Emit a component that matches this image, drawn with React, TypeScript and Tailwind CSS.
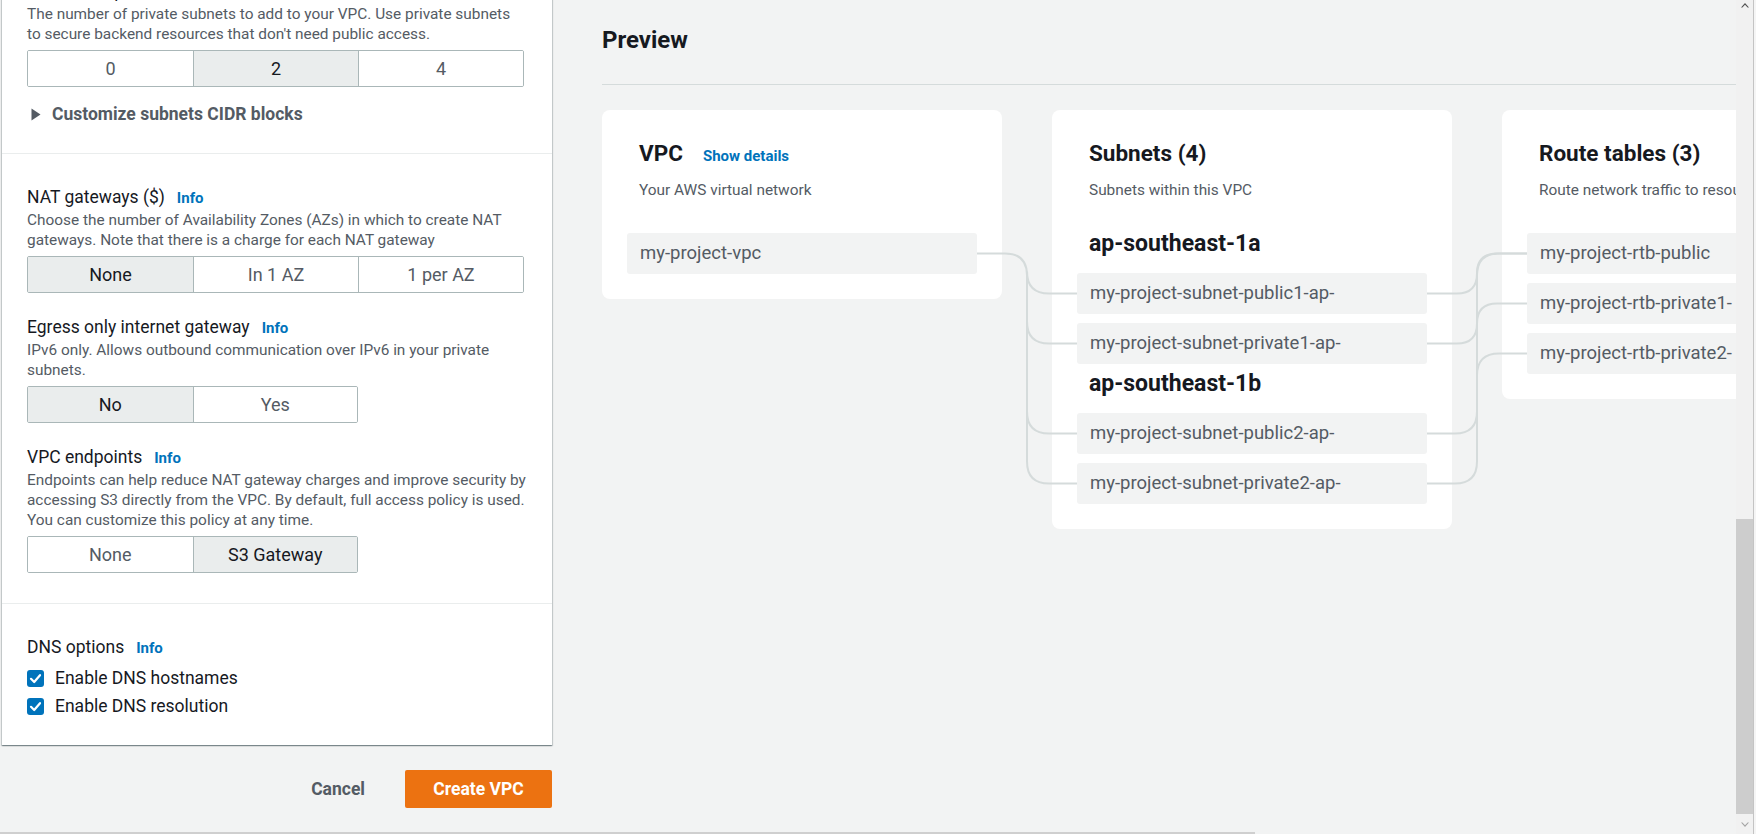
import React from "react";

const dark = "text-[#16191f]";
const gray = "text-[#545b64]";

function Info() {
  return <span className="ml-[12px] text-[15px] font-bold text-[#0073bb]">Info</span>;
}

function Label({ text }: { text: string }) {
  return (
    <div className="flex items-baseline h-[26px] leading-[26px] whitespace-nowrap">
      <span className={`text-[17.5px] ${dark}`}>{text}</span>
      <Info />
    </div>
  );
}

function Desc({ lines }: { lines: string[] }) {
  return (
    <div className={`text-[15.4px] leading-[20px] ${gray} whitespace-nowrap`}>
      {lines.map((l) => (
        <div key={l}>{l}</div>
      ))}
    </div>
  );
}

function Segmented({ options, selected }: { options: string[]; selected: number }) {
  return (
    <div
      className={`mt-[6px] grid border border-[#aab7b8] rounded-[2px] overflow-hidden ${
        options.length === 3 ? "w-[497px] grid-cols-3" : "w-[331px] grid-cols-2"
      }`}
    >
      {options.map((o, i) => (
        <div
          key={o}
          className={`h-[35px] flex items-center justify-center text-[18px] ${i > 0 ? "border-l border-[#aab7b8]" : ""} ${
            i === selected ? `bg-[#eaeded] ${dark}` : `bg-white ${gray}`
          }`}
        >
          {o}
        </div>
      ))}
    </div>
  );
}

function Checkbox({ label }: { label: string }) {
  return (
    <div className="h-[28px] flex items-center">
      <div className="w-[17px] h-[17px] rounded-[3px] bg-[#0073bb] flex items-center justify-center">
        <svg width="17" height="17" viewBox="0 0 17 17">
          <path d="M4 8.8 L7.2 12 L13 5.2" fill="none" stroke="white" strokeWidth="2.2" strokeLinecap="round" strokeLinejoin="round" />
        </svg>
      </div>
      <span className={`ml-[11px] text-[17.5px] ${dark}`}>{label}</span>
    </div>
  );
}

function Item({ text }: { text: string }) {
  return (
    <div className={`h-[41px] bg-[#f2f3f3] rounded-[3px] pl-[13px] flex items-center text-[18.5px] ${gray} whitespace-nowrap overflow-hidden`}>
      {text}
    </div>
  );
}

function CardHead({ title, desc, link }: { title: string; desc: string; link?: string }) {
  return (
    <div className="px-[12px] whitespace-nowrap">
      <div className="flex items-baseline h-[30px] leading-[30px]">
        <span className={`text-[22.5px] font-bold ${dark}`}>{title}</span>
        {link && <span className="ml-[20px] text-[15px] font-bold text-[#0073bb]">{link}</span>}
      </div>
      <div className={`mt-[11px] text-[15.4px] leading-[22px] ${gray}`}>{desc}</div>
    </div>
  );
}

function Zone({ name, first }: { name: string; first?: boolean }) {
  return (
    <div className={`${first ? "mt-[28px]" : "mt-[5px]"} mb-[14px] px-[12px] h-[30px] leading-[30px] text-[23px] font-bold ${dark}`}>
      {name}
    </div>
  );
}

// lines between the preview boxes, coords relative to the cards row
function Connectors() {
  const line = { fill: "none", stroke: "#d5dbdb", strokeWidth: 2 };
  return (
    <svg className="absolute left-0 top-0 pointer-events-none overflow-visible" width="1200" height="420">
      <path {...line} d="M375 143.5 H403 Q425 143.5 425 165.5 V351.5 Q425 373.5 447 373.5 H475" />
      <path {...line} d="M425 161.5 Q425 183.5 447 183.5 H475" />
      <path {...line} d="M425 211.5 Q425 233.5 447 233.5 H475" />
      <path {...line} d="M425 301.5 Q425 323.5 447 323.5 H475" />
      <path {...line} d="M825 183.5 H855 Q875 183.5 875 163.5 Q875 143.5 895 143.5 H925" />
      <path {...line} d="M825 233.5 H855 Q875 233.5 875 213.5 Q875 193.5 895 193.5 H925" />
      <path {...line} d="M825 323.5 H853 Q875 323.5 875 301.5 V165.5 Q875 143.5 897 143.5 H925" />
      <path {...line} d="M825 373.5 H853 Q875 373.5 875 351.5 V265.5 Q875 243.5 897 243.5 H925" />
    </svg>
  );
}

export default function App() {
  return (
    <div className="w-[1756px] h-[834px] overflow-hidden flex bg-[#f2f3f3] font-['Roboto',sans-serif]">
      <div className="flex-1 flex flex-col min-w-0">
        <div className="flex-1 flex min-h-0 overflow-hidden">
          {/* Left: form */}
          <div className="w-[552px] shrink-0">
            <div className="-mt-[52px] ml-[2px] w-[550px] bg-white shadow-[0_1px_1px_0_rgba(0,28,36,0.3),1px_1px_1px_0_rgba(0,28,36,0.15),-1px_1px_1px_0_rgba(0,28,36,0.15)]">
              <div className="pt-[30px] pb-[27px] pl-[25px] border-b border-[#eaeded]">
                <Label text="Number of private subnets" />
                <Desc
                  lines={[
                    "The number of private subnets to add to your VPC. Use private subnets",
                    "to secure backend resources that don't need public access.",
                  ]}
                />
                <Segmented options={["0", "2", "4"]} selected={1} />
                <div className="mt-[15px] h-[24px] flex items-center">
                  <svg width="12" height="13" viewBox="0 0 12 13" className="ml-[3px]">
                    <path d="M1.5 0.5 L10.5 6.5 L1.5 12.5 Z" fill="#545b64" />
                  </svg>
                  <span className={`ml-[10px] text-[17.5px] font-bold ${gray}`}>Customize subnets CIDR blocks</span>
                </div>
              </div>

              <div className="pt-[30px] pb-[30px] pl-[25px] border-b border-[#eaeded]">
                <Label text="NAT gateways ($)" />
                <Desc
                  lines={[
                    "Choose the number of Availability Zones (AZs) in which to create NAT",
                    "gateways. Note that there is a charge for each NAT gateway",
                  ]}
                />
                <Segmented options={["None", "In 1 AZ", "1 per AZ"]} selected={0} />

                <div className="mt-[21px]">
                  <Label text="Egress only internet gateway" />
                </div>
                <Desc
                  lines={[
                    "IPv6 only. Allows outbound communication over IPv6 in your private",
                    "subnets.",
                  ]}
                />
                <Segmented options={["No", "Yes"]} selected={0} />

                <div className="mt-[21px]">
                  <Label text="VPC endpoints" />
                </div>
                <Desc
                  lines={[
                    "Endpoints can help reduce NAT gateway charges and improve security by",
                    "accessing S3 directly from the VPC. By default, full access policy is used.",
                    "You can customize this policy at any time.",
                  ]}
                />
                <Segmented options={["None", "S3 Gateway"]} selected={1} />
              </div>

              <div className="pt-[30px] pb-[25px] pl-[25px]">
                <Label text="DNS options" />
                <div className="mt-[4px]">
                  <Checkbox label="Enable DNS hostnames" />
                  <Checkbox label="Enable DNS resolution" />
                </div>
              </div>
            </div>

            <div className="mt-[25px] flex justify-end items-center gap-[20px]">
              <button className={`px-[20px] h-[38px] text-[17.5px] font-bold ${gray}`}>Cancel</button>
              <button className="w-[147px] h-[38px] rounded-[2px] bg-[#ec7211] text-white text-[17.5px] font-bold">
                Create VPC
              </button>
            </div>
          </div>

          {/* Right: preview */}
          <div className="flex-1 min-w-0 pl-[50px] overflow-hidden">
            <div className="pt-[25px] pb-[29px] border-b border-[#d5dbdb]">
              <div className={`h-[30px] leading-[30px] text-[24px] font-bold ${dark}`}>Preview</div>
            </div>

            <div className="relative mt-[25px] flex items-start gap-[50px] w-max">
              <div className="w-[400px] shrink-0 bg-white rounded-[8px] pt-[28px] px-[25px] pb-[25px]">
                <CardHead title="VPC" link="Show details" desc="Your AWS virtual network" />
                <div className="mt-[32px]">
                  <Item text="my-project-vpc" />
                </div>
              </div>

              <div className="w-[400px] shrink-0 bg-white rounded-[8px] pt-[28px] px-[25px] pb-[25px]">
                <CardHead title="Subnets (4)" desc="Subnets within this VPC" />
                <Zone name="ap-southeast-1a" first />
                <div className="flex flex-col gap-[9px]">
                  <Item text="my-project-subnet-public1-ap-" />
                  <Item text="my-project-subnet-private1-ap-" />
                </div>
                <Zone name="ap-southeast-1b" />
                <div className="flex flex-col gap-[9px]">
                  <Item text="my-project-subnet-public2-ap-" />
                  <Item text="my-project-subnet-private2-ap-" />
                </div>
              </div>

              <div className="w-[400px] shrink-0 bg-white rounded-[8px] pt-[28px] px-[25px] pb-[25px]">
                <CardHead title="Route tables (3)" desc="Route network traffic to resources" />
                <div className="mt-[32px] flex flex-col gap-[9px]">
                  <Item text="my-project-rtb-public" />
                  <Item text="my-project-rtb-private1-" />
                  <Item text="my-project-rtb-private2-" />
                </div>
              </div>

              <Connectors />
            </div>
          </div>
        </div>

        <div className="h-[2px] shrink-0">
          <div className="w-[1255px] h-[2px] bg-[#cfcfcf]" />
        </div>
      </div>

      {/* window scrollbar */}
      <div className="w-[20px] shrink-0 flex">
        <div className="w-[17px] bg-[#f1f1f1] flex flex-col">
          <div className="h-[17px] flex justify-center pt-[2px]">
            <svg width="8" height="6" viewBox="0 0 8 6">
              <path d="M0 5.5 L4 1 L8 5.5 L6.6 5.5 L4 2.8 L1.4 5.5 Z" fill="#505050" />
            </svg>
          </div>
          <div className="flex-1 flex flex-col">
            <div className="flex-1" />
            <div className="h-[295px] bg-[#cdcdcd]" />
            <div className="h-[3px]" />
          </div>
          <div className="h-[17px] flex justify-center items-start pt-[5px]">
            <svg width="8" height="6" viewBox="0 0 8 6">
              <path d="M0 0.5 L4 5 L8 0.5 L6.6 0.5 L4 3.2 L1.4 0.5 Z" fill="#a3a3a3" />
            </svg>
          </div>
        </div>
        <div className="w-px bg-[#c4c4c4]" />
        <div className="w-[2px] bg-[#f5f5f5]" />
      </div>
    </div>
  );
}
